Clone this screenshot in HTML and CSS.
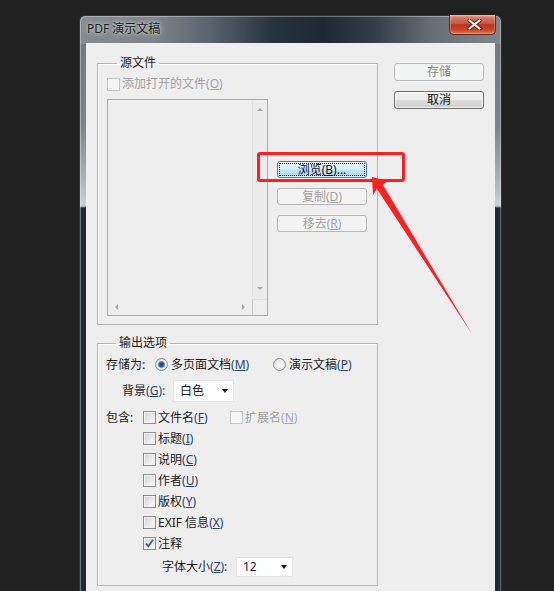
FILE: index.html
```html
<!DOCTYPE html>
<html lang="zh-CN">
<head>
<meta charset="utf-8">
<title>PDF 演示文稿</title>
<link rel="stylesheet" href="styles.css">
</head>
<body>
<div class="desk">
  <div class="window">
    <div class="titlebar">
      <span class="title">PDF 演示文稿</span>
      <div class="close">
        <svg width="15" height="11" viewBox="0 0 15 11">
          <path d="M2.5 1.5 L12.5 9.5 M12.5 1.5 L2.5 9.5" stroke="#5a2018" stroke-width="4" stroke-linecap="round"/>
          <path d="M2.5 1.5 L12.5 9.5 M12.5 1.5 L2.5 9.5" stroke="#ffffff" stroke-width="2.2" stroke-linecap="round"/>
        </svg>
      </div>
    </div>
    <div class="client">
      <div class="left">
        <fieldset class="group g1">
          <legend>源文件</legend>
          <div class="row add disabled"><span class="cb"></span>添加打开的文件<span class="mn">(<u>O</u>)</span></div>
          <div class="src">
            <div class="listbox">
              <div class="list-area"></div>
              <div class="vscroll"><span class="arr up"></span><span class="arr down"></span></div>
              <div class="hscroll"><span class="arr lt"></span><span class="arr rt"></span></div>
              <div class="corner"></div>
            </div>
            <div class="src-buttons">
              <button class="btn primary">浏览(<u>B</u>)...</button>
              <button class="btn" disabled>复制(<u>D</u>)</button>
              <button class="btn" disabled>移去(<u>R</u>)</button>
            </div>
          </div>
        </fieldset>
        <fieldset class="group g2">
          <legend>输出选项</legend>
          <div class="row r1">
            <span class="lbl-save">存储为:</span>
            <span class="opt opt1"><span class="rb on"></span>多页面文档<span class="mn">(<u>M</u>)</span></span>
            <span class="opt"><span class="rb"></span>演示文稿<span class="mn">(<u>P</u>)</span></span>
          </div>
          <div class="row r2">
            <span class="lbl-bg">背景<span class="mn">(<u>G</u>):</span></span>
            <span class="select sel-bg">白色<span class="caret"></span></span>
          </div>
          <div class="row r3">
            <span class="lbl-inc">包含:</span>
            <span class="chk chk1"><span class="cb"></span>文件名<span class="mn">(<u>F</u>)</span></span>
            <span class="chk disabled"><span class="cb"></span>扩展名<span class="mn">(<u>N</u>)</span></span>
          </div>
          <div class="row ri"><span class="cb"></span>标题<span class="mn">(<u>I</u>)</span></div>
          <div class="row ri"><span class="cb"></span>说明<span class="mn">(<u>C</u>)</span></div>
          <div class="row ri"><span class="cb"></span>作者<span class="mn">(<u>U</u>)</span></div>
          <div class="row ri"><span class="cb"></span>版权<span class="mn">(<u>Y</u>)</span></div>
          <div class="row ri"><span class="cb"></span>EXIF 信息<span class="mn">(<u>X</u>)</span></div>
          <div class="row ri"><span class="cb checked"><svg width="11" height="11" viewBox="0 0 11 11"><path d="M2 5.5 L4.3 8.3 L9 1.8" fill="none" stroke="#3d5a92" stroke-width="1.8"/></svg></span>注释</div>
          <div class="row r10">
            <span class="lbl-size">字体大小<span class="mn">(<u>Z</u>):</span></span>
            <span class="select sel-size">12<span class="caret"></span></span>
          </div>
        </fieldset>
      </div>
      <div class="right">
        <button class="btn big" disabled>存储</button>
        <button class="btn big cancel">取消</button>
      </div>
    </div>
  </div>
  <div class="annot-box"></div>
  <svg class="annot-arrow" width="554" height="591" viewBox="0 0 554 591">
    <polygon points="372,177 387,181 383,185 472,334 377,189 373,195" fill="#ff1f1f"/>
  </svg>
</div>
</body>
</html>
```

FILE: styles.css
```css
* { box-sizing: border-box; }
html, body { margin: 0; padding: 0; }
body {
  width: 554px;
  height: 591px;
  overflow: hidden;
  background: #212121;
  font-family: "Noto Sans", "Noto Sans CJK SC", sans-serif;
  font-size: 12px;
  line-height: 16px;
  color: #1b1b1b;
}
.desk {
  position: relative;
  width: 554px;
  height: 591px;
  overflow: hidden;
  padding: 15px 0 0 79px;
}
.window {
  width: 423px;
  height: 576px;
  border: 1px solid #2c3137;
  border-bottom: 0;
  border-radius: 6px 6px 0 0;
  padding: 0 6px;
  background:
    linear-gradient(90deg, #848b91 0%, #7c8389 18%, #56606b 32%, #27323f 46%, #1d2834 58%, #343e4a 70%, #687077 84%, #80878d 100%) 0 0 / 100% 28px no-repeat,
    linear-gradient(180deg, #6f767d 0, #7c838a 110px, #a9afb4 160px, #cdd1d4 190px, #1f2a37 192px, #1f2a37 100%);
  box-shadow: inset 1px 1px 0 rgba(255,255,255,0.35), inset -1px 0 0 rgba(255,255,255,0.25);
}
.titlebar {
  display: flex;
  align-items: flex-start;
  height: 27px;
}
.title {
  padding: 5px 0 0 1px;
  color: #1c1c1c;
  text-shadow: 0 0 6px rgba(215,220,225,0.95), 0 0 3px rgba(215,220,225,0.9);
}
.close {
  margin: -1px -1px 0 auto;
  width: 47px;
  height: 20px;
  border: 1px solid #5b2a22;
  border-top: 0;
  border-radius: 0 0 5px 5px;
  background: linear-gradient(180deg, #e7a898 0%, #d5725e 18%, #c9553f 46%, #b8331c 52%, #cc4326 78%, #de7a5c 100%);
  box-shadow: inset 0 0 0 1px rgba(255,210,200,0.35);
  display: flex;
  align-items: center;
  justify-content: center;
  padding: 0 0 0 3px;
}
.client {
  display: flex;
  gap: 16px;
  height: 549px;
  background: #eeeeee;
  padding: 12px 11px 0;
}
.left { width: 281px; flex: none; }
.right {
  width: 90px;
  flex: none;
  padding-top: 8px;
  display: flex;
  flex-direction: column;
  gap: 10px;
}
.group {
  margin: 0;
  min-width: 0;
  border: 1px solid #b6b6b6;
  box-shadow: 1px 1px 0 #fbfbfb inset;
}
.group legend {
  padding: 0 3px;
  margin-left: 10px;
  line-height: 16px;
}
.g1 { padding: 0 9px 8px; }
.g2 { padding: 0 8px 8px; margin-top: 10px; }
.row {
  display: flex;
  align-items: center;
  white-space: nowrap;
}
.add { height: 16px; margin-top: 5px; }
.disabled { color: #a2a2a2; }
.disabled .mn { color: #a2a6ae; }
.mn { color: #24406d; }
.mn u { text-decoration-thickness: 1px; text-underline-offset: 1px; }

.cb {
  display: inline-flex;
  align-items: center;
  justify-content: center;
  width: 13px;
  height: 13px;
  flex: none;
  border: 1px solid #8e8f8f;
  background: linear-gradient(135deg, #d4d4d4 0%, #eaeaea 55%, #fafafa 100%);
  box-shadow: inset 0 0 0 1px #f2f2f2;
  margin-right: 2px;
}
.disabled .cb {
  border-color: #c6c6c6;
  background: #f5f5f5;
  box-shadow: none;
}
.rb {
  display: inline-block;
  width: 13px;
  height: 13px;
  flex: none;
  border-radius: 50%;
  border: 1px solid #8e8f8f;
  background: radial-gradient(circle at 60% 60%, #fbfbfb 0, #e4e4e4 70%, #d2d2d2 100%);
  margin-right: 3px;
}
.rb.on {
  background:
    radial-gradient(circle at 50% 50%, #1c3f78 0, #2f5fa8 2.2px, #7ea6d8 3.4px, rgba(255,255,255,0) 3.8px),
    radial-gradient(circle at 60% 60%, #fbfbfb 0, #e4e4e4 70%, #d2d2d2 100%);
}

.src { display: flex; margin-top: 7px; }
.listbox {
  width: 161px;
  height: 217px;
  border: 1px solid #a9a9a9;
  display: grid;
  grid-template-columns: 1fr 15px;
  grid-template-rows: 1fr 16px;
  background: #eeeeee;
}
.vscroll {
  border-left: 1px solid #e2e2e2;
  background: #ececec;
  display: flex;
  flex-direction: column;
  justify-content: space-between;
  align-items: center;
  padding: 8px 0 9px;
}
.hscroll {
  display: flex;
  justify-content: space-between;
  align-items: center;
  padding: 0 7px 0 7px;
}
.corner {
  border-left: 1px solid #c8c8c8;
  border-top: 1px solid #e2e2e2;
}
.arr { width: 0; height: 0; display: block; }
.arr.up { border-left: 3px solid transparent; border-right: 3px solid transparent; border-bottom: 3px solid #a8a8a8; }
.arr.down { border-left: 3px solid transparent; border-right: 3px solid transparent; border-top: 3px solid #a8a8a8; }
.arr.lt { border-top: 3px solid transparent; border-bottom: 3px solid transparent; border-right: 3px solid #a8a8a8; }
.arr.rt { border-top: 3px solid transparent; border-bottom: 3px solid transparent; border-left: 3px solid #a8a8a8; }

.src-buttons {
  margin-left: 9px;
  padding-top: 62px;
  display: flex;
  flex-direction: column;
  gap: 10px;
}
.btn {
  display: block;
  width: 90px;
  height: 17px;
  margin: 0;
  padding: 0;
  border: 1px solid #b7b7b7;
  border-radius: 3px;
  background: #f4f4f4;
  color: #a3a3a3;
  font: inherit;
  line-height: 15px;
  text-align: center;
}
.btn.primary {
  border-color: #3c7fb1;
  color: #111;
  background: linear-gradient(180deg, #eaf6fd 0%, #d9f0fc 48%, #bee6fd 52%, #a7d9f5 100%);
  outline: 1px dotted #222;
  outline-offset: -3px;
  box-shadow: inset 0 0 0 1px rgba(255,255,255,0.6);
}
.btn.big { height: 18px; line-height: 16px; color: #8a8a8a; border-color: #bdbdbd; background: #f3f4f4; }
.btn.cancel {
  color: #111;
  border-color: #707070;
  background: linear-gradient(180deg, #f3f3f3 0%, #ebebeb 48%, #dddddd 52%, #cfcfcf 100%);
  box-shadow: inset 0 0 0 1px rgba(255,255,255,0.7);
}

.r1 { height: 21px; margin-top: 3px; }
.lbl-save { width: 49px; }
.opt { display: inline-flex; align-items: center; }
.opt1 { width: 118px; }
.r2 { height: 22px; margin-top: 5px; }
.lbl-bg { margin-left: 16px; width: 51px; }
.select {
  display: flex;
  align-items: center;
  background: #ffffff;
  border: 1px solid #e4e4e4;
  padding-left: 6px;
}
.sel-bg { width: 61px; height: 22px; }
.sel-size { width: 57px; height: 20px; }
.caret {
  margin-left: auto;
  margin-right: 5px;
  width: 0;
  height: 0;
  border-left: 3.5px solid transparent;
  border-right: 3.5px solid transparent;
  border-top: 4px solid #111;
}
.r3 { height: 21px; margin-top: 5px; }
.lbl-inc { width: 37px; }
.chk { display: inline-flex; align-items: center; }
.chk1 { width: 87px; }
.ri { height: 21px; padding-left: 37px; }
.r10 { height: 20px; margin-top: 3px; padding-left: 56px; }
.lbl-size { width: 74px; }

.annot-box {
  position: absolute;
  left: 257px;
  top: 152px;
  width: 148px;
  height: 30px;
  border: 3px solid #ff1f1f;
  border-radius: 3px;
}
.annot-arrow {
  position: absolute;
  left: 0;
  top: 0;
  pointer-events: none;
}
```
